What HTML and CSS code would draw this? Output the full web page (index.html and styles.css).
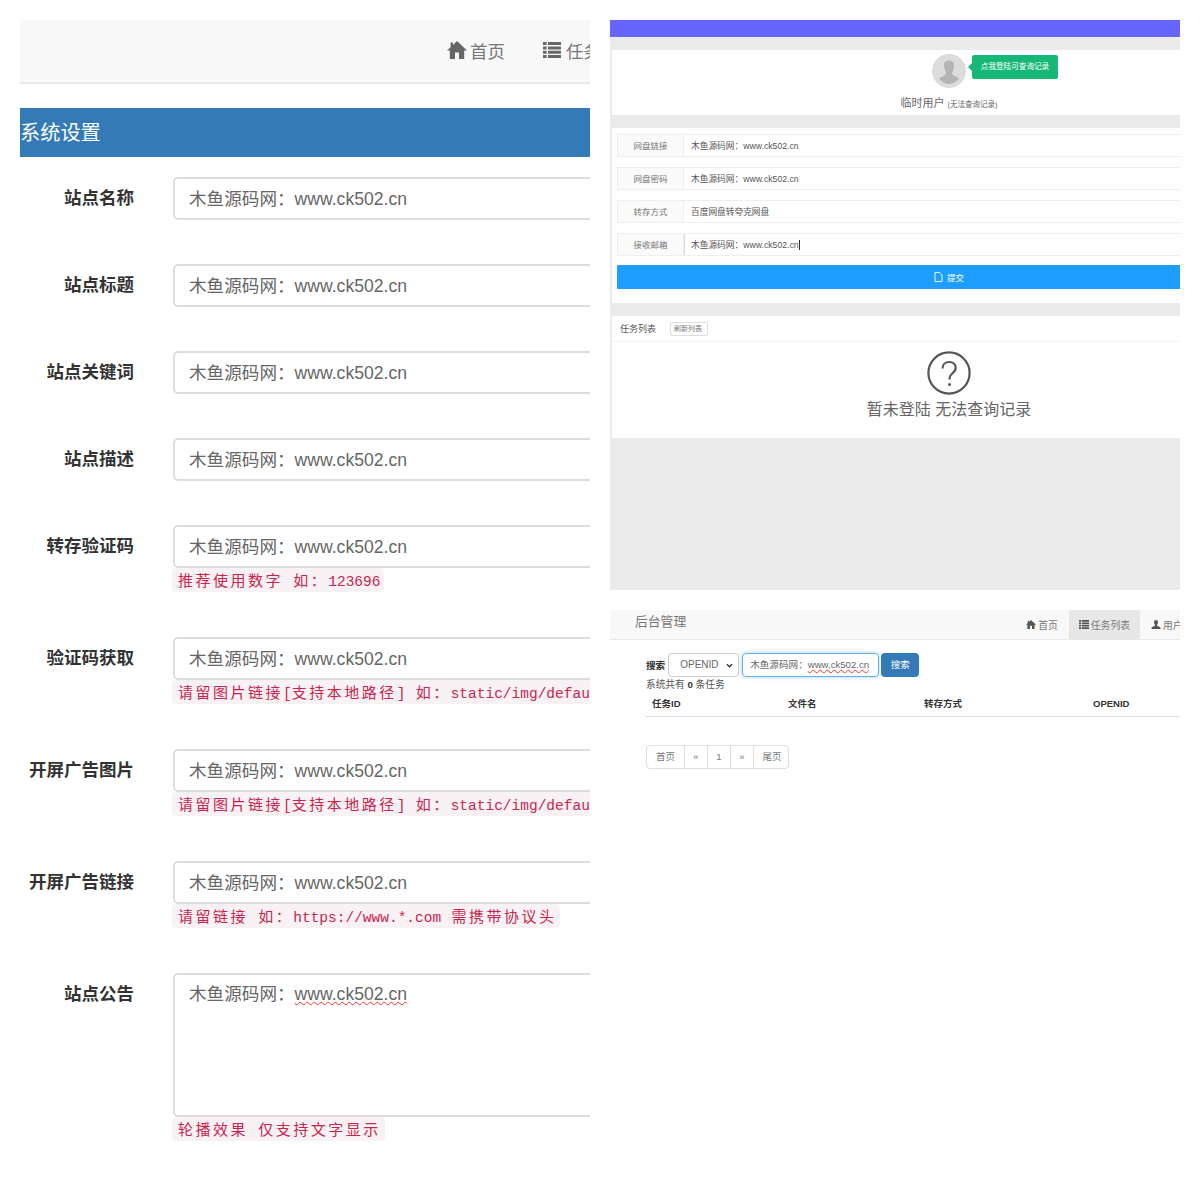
FILE: index.html
```html
<!DOCTYPE html>
<html lang="zh-CN">
<head>
<meta charset="utf-8">
<title>系统设置</title>
<link rel="stylesheet" href="styles.css">
</head>
<body>
<div class="collage">
  <section class="settings">
    <nav class="top-nav">
      <a class="top-link"><svg class="ico-home-l" viewBox="0 0 20 18"><path d="M10 0 L20 9.6 L17.2 9.6 L17.2 18 L12 18 L12 11.5 L8 11.5 L8 18 L2.8 18 L2.8 9.6 L0 9.6 L3.6 6.2 L3.6 1.4 L6 1.4 L6 3.9 Z"/></svg>首页</a>
      <a class="top-link"><svg class="ico-list-l" viewBox="0 0 18 16"><path d="M0 0h3.6v3H0zM5 0h13v3H5zM0 4.4h3.6v3H0zM5 4.4h13v3H5zM0 8.8h3.6v3H0zM5 8.8h13v3H5zM0 13h3.6v3H0zM5 13h13v3H5z"/></svg>任务列表</a>
    </nav>
    <h1 class="banner">系统设置</h1>
    <div class="form-row"><div class="form-label">站点名称</div><div class="form-field"><div class="text-input">木鱼源码网：www.ck502.cn</div></div></div>
    <div class="form-row"><div class="form-label">站点标题</div><div class="form-field"><div class="text-input">木鱼源码网：www.ck502.cn</div></div></div>
    <div class="form-row"><div class="form-label">站点关键词</div><div class="form-field"><div class="text-input">木鱼源码网：www.ck502.cn</div></div></div>
    <div class="form-row"><div class="form-label">站点描述</div><div class="form-field"><div class="text-input">木鱼源码网：www.ck502.cn</div></div></div>
    <div class="form-row has-hint"><div class="form-label">转存验证码</div><div class="form-field"><div class="text-input">木鱼源码网：www.ck502.cn</div><code class="hint"><span class="han">推荐使用数字</span> <span class="han">如：</span>123696</code></div></div>
    <div class="form-row has-hint"><div class="form-label">验证码获取</div><div class="form-field"><div class="text-input">木鱼源码网：www.ck502.cn</div><code class="hint"><span class="han">请留图片链接</span>[<span class="han">支持本地路径</span>] <span class="han">如：</span>static/img/default.png</code></div></div>
    <div class="form-row has-hint"><div class="form-label">开屏广告图片</div><div class="form-field"><div class="text-input">木鱼源码网：www.ck502.cn</div><code class="hint"><span class="han">请留图片链接</span>[<span class="han">支持本地路径</span>] <span class="han">如：</span>static/img/default.png</code></div></div>
    <div class="form-row has-hint"><div class="form-label">开屏广告链接</div><div class="form-field"><div class="text-input">木鱼源码网：www.ck502.cn</div><code class="hint"><span class="han">请留链接</span> <span class="han">如：</span>https://www.*.com <span class="han">需携带协议头</span></code></div></div>
    <div class="form-row has-hint"><div class="form-label">站点公告</div><div class="form-field"><div class="text-input area">木鱼源码网：<span class="spell">www.ck502.cn</span></div><code class="hint"><span class="han">轮播效果</span> <span class="han">仅支持文字显示</span></code></div></div>
  </section>

  <div class="right-col">
    <section class="mobile">
      <div class="mobile-inner">
        <div class="purple-bar"></div>
        <div class="card user-card">
          <div class="avatar"><svg viewBox="0 0 34 34"><circle cx="17" cy="17" r="17" fill="#dcdcdc"/><path d="M12 10.5c0-2.5 2-4 5-4s5 1.500 5 4c0 3-.6 5-1.300 6.500-.5 1-.7 2-.5 3 .5 1.500 3.800 2.300 6.800 4.500C24.500 28 21 30 17 30s-7.500-2-10-5.500c3-2.200 6.300-3 6.800-4.500.2-1 0-2-.5-3-.7-1.500-1.300-3.500-1.300-6.500z" fill="#b4b4b4"/></svg></div>
          <div class="tip">点我登陆可查询记录</div>
          <div class="user-name">临时用户 <small>(无法查询记录)</small></div>
        </div>
        <div class="card task-form">
          <div class="line"><div class="line-label">网盘链接</div><div class="line-value">木鱼源码网：www.ck502.cn</div></div>
          <div class="line"><div class="line-label">网盘密码</div><div class="line-value">木鱼源码网：www.ck502.cn</div></div>
          <div class="line"><div class="line-label">转存方式</div><div class="line-value">百度网盘转夸克网盘</div></div>
          <div class="line"><div class="line-label">接收邮箱</div><div class="line-value focused">木鱼源码网：www.ck502.c<span class="caret">n</span></div></div>
          <div class="submit"><svg class="ico-file" viewBox="0 0 9 10"><path d="M1 .5h4.500L8 3v6.500H1z" fill="none" stroke="#fff" stroke-width=".9"/></svg>提交</div>
        </div>
        <div class="card list-card">
          <div class="list-head"><span>任务列表</span><span class="refresh">刷新列表</span></div>
          <div class="empty">
            <svg class="ico-q" viewBox="0 0 44 44"><circle cx="22" cy="22" r="20.600" fill="none" stroke="#555" stroke-width="2.200"/><path d="M15.500 17.500c0-4 2.800-6.500 6.700-6.500s6.500 2.500 6.500 5.800c0 2.800-1.600 4.200-3.500 5.700-1.700 1.300-2.700 2.500-2.700 5v1" fill="none" stroke="#555" stroke-width="2.200"/><circle cx="22.500" cy="33.500" r="1.500" fill="#555"/></svg>
            <div class="empty-text">暂未登陆 无法查询记录</div>
          </div>
        </div>
      </div>
    </section>

    <section class="admin">
      <nav class="admin-nav">
        <span class="brand">后台管理</span>
        <div class="admin-links">
          <a class="admin-link"><svg class="ico-s" viewBox="0 0 20 18"><path d="M10 0 L20 9.600 L17.200 9.600 L17.200 18 L12 18 L12 11.500 L8 11.500 L8 18 L2.800 18 L2.800 9.600 L0 9.600 L3.600 6.200 L3.600 1.400 L6 1.400 L6 3.900 Z"/></svg>首页</a>
          <a class="admin-link active"><svg class="ico-s" viewBox="0 0 18 16"><path d="M0 0h3.600v3H0zM5 0h13v3H5zM0 4.400h3.600v3H0zM5 4.400h13v3H5zM0 8.800h3.600v3H0zM5 8.800h13v3H5zM0 13h3.600v3H0zM5 13h13v3H5z"/></svg>任务列表</a>
          <a class="admin-link"><svg class="ico-s" viewBox="0 0 16 16"><path d="M4.500 4c0-2.500 1.500-4 3.500-4s3.500 1.500 3.500 4c0 2-.8 3.500-1.500 4.500-.3.600-.3 1.200 0 1.700 1 1 6 1.800 6 4V16H0v-1.800c0-2.200 5-3 6-4 .3-.5.3-1.100 0-1.700C5.300 7.500 4.500 6 4.500 4z"/></svg>用户</a>
        </div>
      </nav>
      <div class="admin-body">
        <div class="search">
          <b class="search-label">搜索</b>
          <div class="select">OPENID<svg class="chev" viewBox="0 0 8 5"><path d="M1 1l3 3 3-3" fill="none" stroke="#333" stroke-width="1.500"/></svg></div>
          <div class="search-input">木鱼源码网：<span class="spell">www.ck502.cn</span></div>
          <div class="search-btn">搜索</div>
        </div>
        <div class="count">系统共有 <b>0</b> 条任务</div>
        <table class="tasks">
          <colgroup><col class="c1"><col class="c2"><col class="c3"><col class="c4"></colgroup>
          <thead><tr><th>任务ID</th><th>文件名</th><th>转存方式</th><th>OPENID</th></tr></thead>
        </table>
        <div class="pager"><span class="p-wide">首页</span><span class="p-mid">«</span><span class="p-mid">1</span><span class="p-mid">»</span><span class="p-wide">尾页</span></div>
      </div>
    </section>
  </div>
</div>
</body>
</html>
```

FILE: styles.css
```css
* { box-sizing: border-box; }
html, body { margin: 0; padding: 0; background: #fff; }
body { font-family: "Liberation Sans", "Noto Sans CJK SC", sans-serif; color: #333; }
.collage { display: grid; grid-template-columns: 570px 570px; column-gap: 20px; padding: 20px; width: 1200px; height: 1200px; }

/* left: settings */
.settings { overflow: hidden; height: 1140px; }
.top-nav { height: 64px; background: #f8f8f8; border-bottom: 2px solid #e9e9e9; display: flex; align-items: center; padding: 0 0 2px 427px; gap: 38px; white-space: nowrap; }
.top-link { display: flex; align-items: center; font-size: 17.5px; color: #777; }
.ico-home-l { width: 20px; height: 18px; fill: #666; margin-right: 3px; }
.ico-list-l { width: 18px; height: 16px; fill: #666; margin-right: 5px; }
.banner { margin: 24px 0 20px; height: 49px; background: #337ab7; color: #fff; font-size: 20.2px; font-weight: 400; line-height: 50px; }
.form-row { display: flex; margin-bottom: 44px; }
.form-row.has-hint { margin-bottom: 45px; }
.form-label { width: 114px; flex: none; text-align: right; font-size: 17.5px; font-weight: 700; color: #333; line-height: 43px; height: 43px; white-space: nowrap; }
.form-field { margin-left: 39px; width: 500px; flex: none; }
.text-input { height: 43px; border: 2px solid #ddd; border-radius: 5px; background: #fff; padding: 0 14px; line-height: 40px; font-size: 17.6px; color: #666; white-space: nowrap; }
.text-input.area { height: 144px; line-height: 38px; }
.spell { text-decoration: underline wavy #e33; text-decoration-thickness: 1px; text-underline-offset: 1px; }
.hint { display: inline-block; margin-left: -1px; height: 24px; line-height: 24px; padding: 0 4px 0 6px; background: #f9f2f4; color: #c7254e; border-radius: 4px; font-family: "Liberation Mono", "Noto Sans CJK SC", monospace; font-size: 14.5px; word-spacing: 1.5px; white-space: nowrap; }
.han { font-family: "Noto Sans CJK SC", sans-serif; font-size: 15px; letter-spacing: 2.5px; }

/* right top: mobile page */
.right-col { display: flex; flex-direction: column; gap: 20px; overflow: hidden; }
.mobile { height: 570px; overflow: hidden; background: #ebebeb; flex: none; }
.mobile-inner { width: 678px; }
.purple-bar { height: 17px; background: #6666ff; margin-bottom: 13px; }
.card { background: #fff; margin: 0 2px 13px; }
.user-card { height: 65px; position: relative; padding-top: 4px; }
.avatar { width: 34px; height: 34px; margin: 0 auto; }
.avatar svg { display: block; width: 34px; height: 34px; }
.tip { position: absolute; left: 360px; top: 5px; width: 86px; height: 24px; background: #16b777; color: #fff; font-size: 7.6px; line-height: 24px; text-align: center; border-radius: 2px; }
.tip::before { content: ""; position: absolute; left: -4px; top: 8px; border: 4px solid transparent; border-left: 0; border-right-color: #16b777; }
.user-name { text-align: center; font-size: 11px; color: #666; margin-top: 8px; line-height: 14px; }
.user-name small { font-size: 7.5px; }
.task-form { height: 175px; padding: 6px 5px 0; }
.line { display: flex; height: 23px; margin-bottom: 10px; border-top: 1px solid #eee; border-bottom: 1px solid #eee; }
.line-label { width: 67px; flex: none; background: #fafafa; border-left: 1px solid #eee; border-right: 1px solid #eee; text-align: center; font-size: 8.5px; color: #777; line-height: 22px; }
.line-value { flex: 1; padding-left: 7px; font-size: 8.7px; color: #555; line-height: 22px; white-space: nowrap; }
.line-value.focused { border-left: 1px solid #ddd; padding-left: 6px; }
.caret { border-right: 1px solid #333; }
.submit { height: 24px; background: #1e9fff; color: #fff; font-size: 8.5px; display: flex; align-items: center; justify-content: center; margin-top: -1px; border-radius: 1px; gap: 4px; }
.ico-file { width: 9px; height: 10px; }
.list-card { height: 122px; margin-bottom: 0; }
.list-head { display: flex; align-items: center; height: 26px; padding-left: 8px; font-size: 9px; color: #555; border-bottom: 1px solid #f3f3f3; }
.refresh { margin-left: 14px; border: 1px solid #ddd; border-radius: 2px; font-size: 7px; color: #777; padding: 0 3px; height: 14px; line-height: 12px; width: 38px; white-space: nowrap; }
.empty { display: flex; flex-direction: column; align-items: center; padding-top: 9px; }
.ico-q { width: 44px; height: 44px; display: block; }
.empty-text { font-size: 16px; line-height: 20px; color: #666; margin-top: 5px; }

/* right bottom: admin */
.admin { overflow: hidden; flex: none; height: 570px; }
.admin-nav { width: 590px; height: 30px; background: #f8f8f8; border-bottom: 1px solid #e7e7e7; display: flex; justify-content: space-between; padding-left: 25px; white-space: nowrap; }
.brand { font-size: 12.8px; line-height: 24px; color: #777; }
.admin-links { display: flex; }
.admin-link { display: flex; align-items: center; font-size: 9.8px; color: #777; padding: 0 10px; height: 29px; }
.admin-link:first-child { padding-right: 11px; }
.admin-link:last-child { width: 60px; padding-left: 11px; padding-right: 0; }
.admin-link.active { background: #e7e7e7; }
.ico-s { width: 10px; height: 9px; fill: #555; margin-right: 2px; flex: none; }
.admin-body { padding: 13px 0 0 36px; }
.search { display: flex; align-items: center; font-size: 9px; color: #333; height: 24px; }
.search-label { font-size: 9.6px; }
.select { width: 71px; height: 24px; margin-left: 3px; border: 1px solid #ccc; border-radius: 4px; background: #fff; font-size: 10px; color: #666; line-height: 22px; padding-left: 11px; position: relative; flex: none; }
.chev { position: absolute; right: 5px; top: 9px; width: 7px; height: 5px; }
.search-input { width: 137px; height: 24px; margin-left: 3px; border: 1px solid #66afe9; border-radius: 4px; box-shadow: 0 0 4px rgba(102, 175, 233, .6); font-size: 9.6px; color: #666; line-height: 22px; padding-left: 7px; white-space: nowrap; flex: none; }
.search-btn { width: 38px; height: 24px; margin-left: 2px; background: #337ab7; color: #fff; border-radius: 4px; text-align: center; line-height: 24px; font-size: 9.5px; flex: none; }
.count { font-size: 9.7px; color: #555; line-height: 13px; margin-top: 1px; }
.count b { color: #333; }
.tasks { width: 600px; table-layout: fixed; border-collapse: collapse; }
.c1, .c2 { width: 136px; }
.c3 { width: 169px; }
.tasks th { height: 25px; padding: 0 6px; text-align: left; font-size: 9.5px; color: #333; border-bottom: 1px solid #ddd; }
.pager { display: flex; margin-top: 28px; width: 143px; height: 24px; border: 1px solid #ddd; border-radius: 4px; font-size: 9.5px; color: #777; line-height: 22px; text-align: center; }
.pager span + span { border-left: 1px solid #ddd; }
.p-wide { width: 37px; flex: none; }
.p-mid { width: 23px; flex: none; }
```
